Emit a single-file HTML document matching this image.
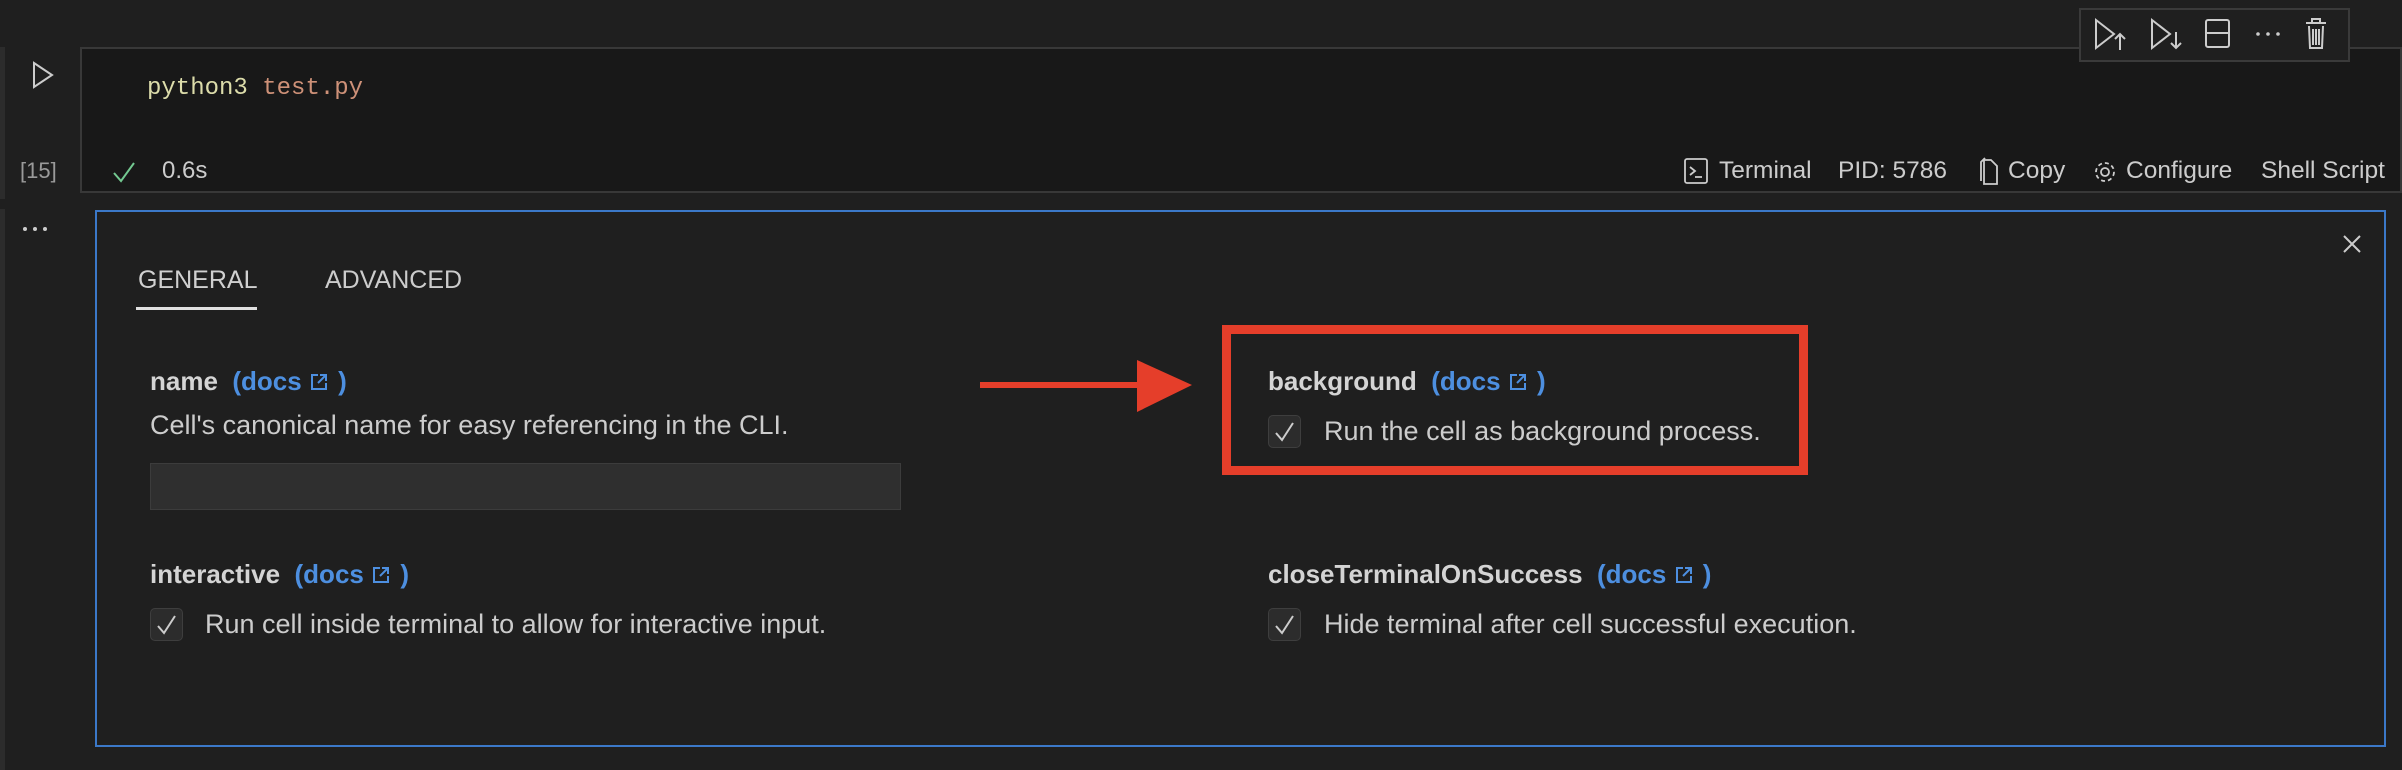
<!DOCTYPE html>
<html><head><meta charset="utf-8"><style>
body{margin:0;width:2402px;height:770px;background:#1f1f1f;position:relative;overflow:hidden;font-family:"Liberation Sans",sans-serif;color:#cccccc}
.a{position:absolute;white-space:nowrap}
.blue{color:#4d8fe0;font-weight:bold}
.cb{position:absolute;width:33px;height:33px;background:#2c2c2c;border:1px solid #3e3e3e;border-radius:5px;box-sizing:border-box}
.lbl{font-size:26px;font-weight:bold;color:#d4d4d4}
.txt{font-size:27px;color:#cccccc}
.st{font-size:24.5px;color:#cccccc;top:157px}
</style></head><body>
<div class="a" style="left:0;top:47px;width:5px;height:152px;background:#2c2c2c"></div>
<div class="a" style="left:0;top:209px;width:5px;height:561px;background:#2c2c2c"></div>
<!-- cell -->
<div class="a" style="left:80px;top:47px;width:2322px;height:146px;background:#181818;border:2px solid #383838;box-sizing:border-box"></div>
<svg class="a" style="left:30px;top:60px" width="26" height="30"><path d="M4 3 L22 15 L4 27 Z" fill="none" stroke="#cccccc" stroke-width="2"/></svg>
<div class="a" style="left:147px;top:75px;font-family:'Liberation Mono',monospace;font-size:24px"><span style="color:#dcdcaa">python3</span> <span style="color:#ce9178">test.py</span></div>
<div class="a" style="left:20px;top:158px;font-size:22px;color:#9a9a9a">[15]</div>
<svg class="a" style="left:112px;top:160px" width="26" height="24"><path d="M2 13 L9 21 L22 3" fill="none" stroke="#73c991" stroke-width="2"/></svg>
<div class="a" style="left:162px;top:157px;font-size:24px">0.6s</div>
<!-- status -->
<svg class="a" style="left:1684px;top:157px" width="26" height="28"><rect x="1" y="2" width="22" height="24" rx="2" fill="none" stroke="#ccc" stroke-width="1.8"/><path d="M6 10 L11 14 L6 18 M11 20 L18 20" fill="none" stroke="#ccc" stroke-width="1.8"/></svg>
<div class="a st" style="left:1719px">Terminal</div>
<div class="a st" style="left:1838px">PID: 5786</div>
<svg class="a" style="left:1977px;top:156px" width="24" height="30"><path d="M4 25 L4 6 L8 2 M7 28 L20 28 L20 10 L14 4 L7 4 Z" fill="none" stroke="#ccc" stroke-width="1.8"/></svg>
<div class="a st" style="left:2008px">Copy</div>
<svg class="a" style="left:2092px;top:159px" width="26" height="26"><circle cx="13" cy="13" r="4" fill="none" stroke="#ccc" stroke-width="1.8"/><circle cx="13" cy="13" r="9" fill="none" stroke="#ccc" stroke-width="1.8" stroke-dasharray="4 3"/></svg>
<div class="a st" style="left:2126px">Configure</div>
<div class="a st" style="left:2261px">Shell Script</div>
<!-- toolbar -->
<div class="a" style="left:2079px;top:8px;width:271px;height:54px;background:#1f1f1f;border:2px solid #3a3a3a;box-sizing:border-box"></div>
<svg class="a" style="left:2090px;top:14px" width="260" height="40">
<g fill="none" stroke="#ccc" stroke-width="2">
<path d="M6 6 L24 20 L6 34 Z"/><path d="M30 36 L30 20 M25 25 L30 20 L35 25"/>
<path d="M62 6 L80 20 L62 34 Z"/><path d="M86 18 L86 34 M81 29 L86 34 L91 29"/>
<rect x="116" y="6" width="23" height="27" rx="2"/><path d="M116 19 L139 19"/>
<path d="M216 9 L236 9 M222 9 L222 5 L230 5 L230 9 M219 12 L220 34 L232 34 L233 12 M223 15 L223 31 M226 15 L226 31 M229 15 L229 31"/>
</g>
<g fill="#ccc"><circle cx="168" cy="20" r="1.8"/><circle cx="178" cy="20" r="1.8"/><circle cx="188" cy="20" r="1.8"/></g>
</svg>
<!-- dots -->
<svg class="a" style="left:22px;top:224px" width="30" height="10"><g fill="#ccc"><circle cx="3" cy="5" r="2"/><circle cx="13" cy="5" r="2"/><circle cx="23" cy="5" r="2"/></g></svg>
<!-- output panel -->
<div class="a" style="left:95px;top:210px;width:2291px;height:537px;border:2px solid #3b78c8;box-sizing:border-box"></div>
<svg class="a" style="left:2342px;top:234px" width="20" height="20"><path d="M2 2 L18 18 M18 2 L2 18" stroke="#ccc" stroke-width="2"/></svg>
<div class="a" style="left:138px;top:266px;font-size:25px;color:#d0d0d0">GENERAL</div>
<div class="a" style="left:136px;top:307px;width:121px;height:3px;background:#e0e0e0"></div>
<div class="a" style="left:325px;top:266px;font-size:25px;color:#cccccc">ADVANCED</div>

<div class="a lbl" style="left:150px;top:366px">name <span class="blue">&nbsp;(docs <svg width="22" height="20" style="vertical-align:-2px"><path d="M9 3 L3 3 L3 17 L17 17 L17 11 M11 3 L17 3 L17 9 M17 3 L9 11" fill="none" stroke="#4d8fe0" stroke-width="2"/></svg> )</span></div>
<div class="a txt" style="left:150px;top:410px">Cell's canonical name for easy referencing in the CLI.</div>
<div class="a" style="left:150px;top:463px;width:751px;height:47px;background:#2f2f2f;border:1px solid #3c3c3c;box-sizing:border-box"></div>

<div class="a lbl" style="left:150px;top:559px">interactive <span class="blue">&nbsp;(docs <svg width="22" height="20" style="vertical-align:-2px"><path d="M9 3 L3 3 L3 17 L17 17 L17 11 M11 3 L17 3 L17 9 M17 3 L9 11" fill="none" stroke="#4d8fe0" stroke-width="2"/></svg> )</span></div>
<div class="cb" style="left:150px;top:608px"></div>
<svg class="a" style="left:155px;top:612px" width="24" height="26"><path d="M3 14 L9 21 L20 4" fill="none" stroke="#ccc" stroke-width="2"/></svg>
<div class="a txt" style="left:205px;top:609px">Run cell inside terminal to allow for interactive input.</div>

<div class="a lbl" style="left:1268px;top:366px">background <span class="blue">&nbsp;(docs <svg width="22" height="20" style="vertical-align:-2px"><path d="M9 3 L3 3 L3 17 L17 17 L17 11 M11 3 L17 3 L17 9 M17 3 L9 11" fill="none" stroke="#4d8fe0" stroke-width="2"/></svg> )</span></div>
<div class="cb" style="left:1268px;top:415px"></div>
<svg class="a" style="left:1273px;top:419px" width="24" height="26"><path d="M3 14 L9 21 L20 4" fill="none" stroke="#ccc" stroke-width="2"/></svg>
<div class="a txt" style="left:1324px;top:416px">Run the cell as background process.</div>

<div class="a lbl" style="left:1268px;top:559px">closeTerminalOnSuccess <span class="blue">&nbsp;(docs <svg width="22" height="20" style="vertical-align:-2px"><path d="M9 3 L3 3 L3 17 L17 17 L17 11 M11 3 L17 3 L17 9 M17 3 L9 11" fill="none" stroke="#4d8fe0" stroke-width="2"/></svg> )</span></div>
<div class="cb" style="left:1268px;top:608px"></div>
<svg class="a" style="left:1273px;top:612px" width="24" height="26"><path d="M3 14 L9 21 L20 4" fill="none" stroke="#ccc" stroke-width="2"/></svg>
<div class="a txt" style="left:1324px;top:609px">Hide terminal after cell successful execution.</div>

<!-- annotation -->
<div class="a" style="left:1222px;top:325px;width:586px;height:150px;border:9px solid #e53e2a;box-sizing:border-box"></div>
<svg class="a" style="left:980px;top:358px" width="215" height="56"><path d="M0 24 L160 24 L160 30 L0 30 Z" fill="#e53e2a"/><path d="M157 2 L212 27 L157 54 Z" fill="#e53e2a"/></svg>
</body></html>
